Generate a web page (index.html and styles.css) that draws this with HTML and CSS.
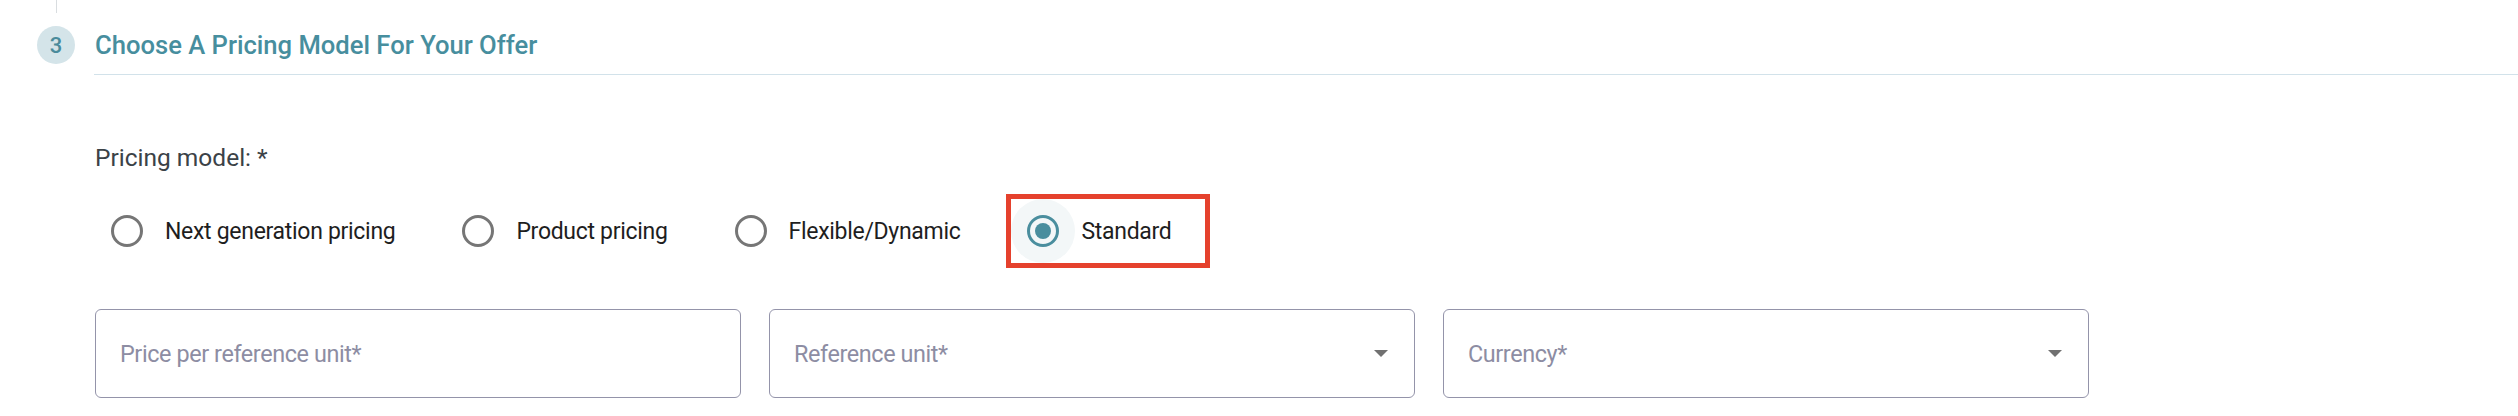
FILE: index.html
```html
<!DOCTYPE html>
<html lang="en">
<head>
<meta charset="utf-8">
<title>Choose A Pricing Model</title>
<link rel="stylesheet" href="styles.css">
</head>
<body>
<section class="step">
  <div class="step-rail">
    <div class="connector"></div>
    <div class="step-num">3</div>
  </div>
  <div class="step-main">
    <div class="connector-spacer"></div>
    <h2 class="step-title">Choose A Pricing Model For Your Offer</h2>
    <div class="step-body">
      <div class="field-label">Pricing model: *</div>
      <div class="radio-group">
        <label class="option">
          <span class="halo"><span class="radio"></span></span>
          <span class="option-text">Next generation pricing</span>
        </label>
        <label class="option">
          <span class="halo"><span class="radio"></span></span>
          <span class="option-text">Product pricing</span>
        </label>
        <label class="option">
          <span class="halo"><span class="radio"></span></span>
          <span class="option-text">Flexible/Dynamic</span>
        </label>
        <label class="option selected highlighted">
          <span class="halo"><span class="radio"><span class="dot"></span></span></span>
          <span class="option-text">Standard</span>
        </label>
      </div>
      <div class="fields">
        <div class="field">
          <span class="placeholder">Price per reference unit*</span>
        </div>
        <div class="field">
          <span class="placeholder">Reference unit*</span>
          <span class="caret"></span>
        </div>
        <div class="field">
          <span class="placeholder">Currency*</span>
          <span class="caret"></span>
        </div>
      </div>
    </div>
  </div>
</section>
</body>
</html>
```
FILE: styles.css
```css
* { box-sizing: border-box; }
html, body {
  margin: 0;
  padding: 0;
  background: #ffffff;
}
body {
  font-family: Roboto, "Noto Sans", "Liberation Sans", sans-serif;
  color: #1f1f1f;
  width: 2518px;
  height: 416px;
  overflow: hidden;
}
.step {
  display: flex;
}
.step-rail {
  width: 94px;
  flex: none;
  display: flex;
  flex-direction: column;
  align-items: center;
  padding-left: 18px;
}
.connector {
  width: 1px;
  height: 13px;
  background: #d9dde0;
}
.step-num {
  margin-top: 13px;
  width: 38px;
  height: 38px;
  border-radius: 50%;
  background: #d4e4e9;
  color: #4a8b9b;
  font-size: 22px;
  font-weight: 500;
  display: flex;
  align-items: center;
  justify-content: center;
}
.step-main {
  flex: 1;
  min-width: 0;
}
.connector-spacer {
  height: 26px;
}
.step-title {
  margin: 0;
  font-size: 25.6px;
  line-height: 38px;
  font-weight: 500;
  color: #478e9e;
  padding-left: 1px;
  padding-bottom: 10px;
  border-bottom: 1px solid #d2e2ea;
}
.step-body {
  padding-left: 1px;
}
.field-label {
  margin-top: 68px;
  font-size: 24.5px;
  line-height: 30px;
  color: #3b4247;
}
.radio-group {
  margin-top: 26px;
  display: flex;
  align-items: center;
  gap: 51px;
}
.option {
  display: flex;
  align-items: center;
  height: 64px;
}
.halo {
  width: 64px;
  height: 64px;
  border-radius: 50%;
  display: flex;
  align-items: center;
  justify-content: center;
}
.radio {
  width: 32px;
  height: 32px;
  border: 3px solid #767676;
  border-radius: 50%;
  display: flex;
  align-items: center;
  justify-content: center;
}
.option-text {
  margin-left: 6px;
  font-size: 23px;
  letter-spacing: -0.3px;
  color: #1e1e1e;
}
.selected .halo {
  background: #f3f7f8;
}
.selected .radio {
  border-color: #4a8e9e;
}
.dot {
  width: 16px;
  height: 16px;
  border-radius: 50%;
  background: #4a8e9e;
}
.highlighted {
  padding-right: 33px;
  outline: 5px solid #e5412d;
  outline-offset: 0;
}
.fields {
  margin-top: 46px;
  display: flex;
  gap: 28px;
}
.field {
  width: 646px;
  height: 89px;
  border: 1px solid #9494aa;
  border-radius: 6px;
  display: flex;
  align-items: center;
  padding: 0 26px 0 24px;
}
.placeholder {
  flex: 1;
  font-size: 23.4px;
  letter-spacing: -0.4px;
  color: #8d8da3;
}
.caret {
  width: 0;
  height: 0;
  border-left: 7px solid transparent;
  border-right: 7px solid transparent;
  border-top: 7px solid #717171;
}
```
